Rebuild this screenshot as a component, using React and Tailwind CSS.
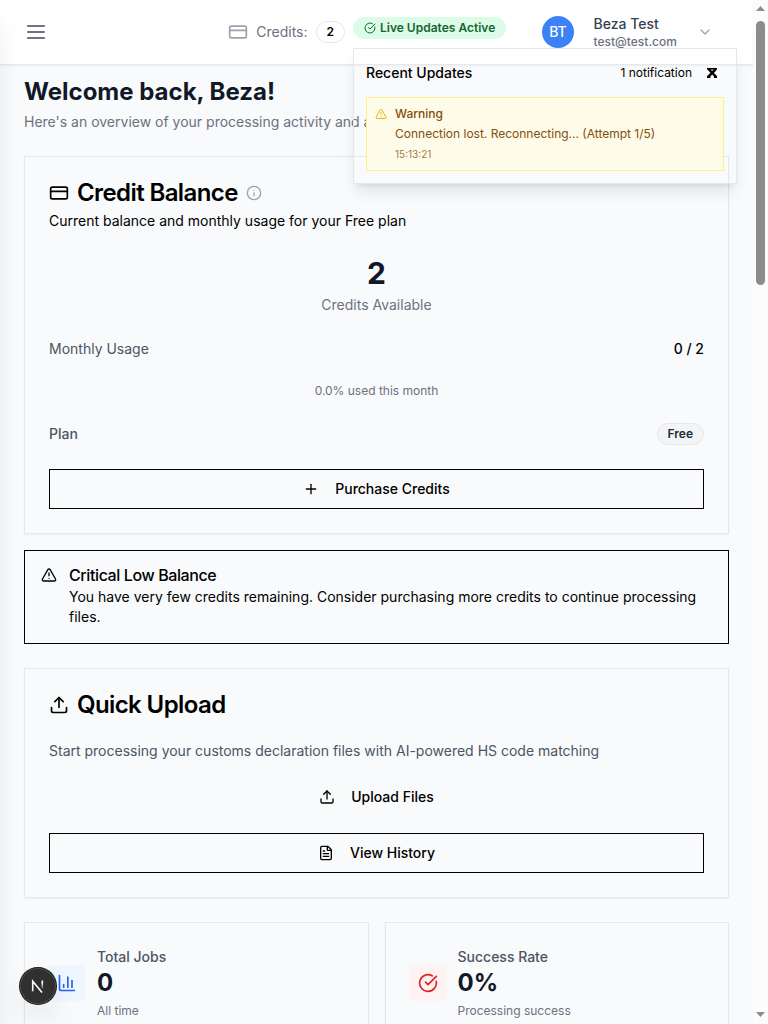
import React from "react";
import {
  CreditCard, Info, Plus, TriangleAlert, Upload, FileText, CircleCheckBig,
  ChevronDown, ChartColumn,
} from "lucide-react";

function Header() {
  return (
    <header className="flex h-[65px] shrink-0 items-center border-b border-[#e5e7eb] bg-white pl-6 pr-10 shadow-xs">
      <svg className="size-6 text-[#6b7280]" viewBox="0 0 24 24" fill="none" stroke="currentColor" strokeWidth="2" strokeLinecap="round">
        <path d="M4 6h16M4 12h16M4 18h16" />
      </svg>
      <div className="ml-auto flex items-center">
        <CreditCard className="size-5 text-[#9ca3af]" />
        <span className="ml-2 text-sm text-[#6b7280]">Credits:</span>
        <span className="ml-2 rounded-full border border-[#e5e7eb] px-2.5 py-0.5 text-xs font-semibold text-black">2</span>
      </div>
      <div className="relative ml-2 mb-2">
        <div className="flex w-[153px] items-center gap-1 rounded-full border border-transparent bg-[#dcfce7] px-2.5 py-0.5 text-xs font-semibold whitespace-nowrap text-[#166534]">
          <CircleCheckBig className="size-3 shrink-0" />
          Live Updates Active
        </div>
        <Notifications />
      </div>
      <div className="ml-9 flex items-center">
        <div className="flex size-8 items-center justify-center rounded-full bg-[#3b82f6] text-sm font-medium text-white">BT</div>
        <div className="ml-[19.5px] w-[83.5px]">
          <p className="text-sm font-medium text-[#374151]">Beza Test</p>
          <p className="text-xs font-medium text-[#6b7280]">test@test.com</p>
        </div>
        <ChevronDown className="ml-5 size-4 text-[#9ca3af]" />
      </div>
    </header>
  );
}

function Notifications() {
  return (
    <div className="absolute left-0 top-[31px] z-50 w-96 border border-[#e5e7eb] p-3 shadow-lg">
      <div className="flex h-6 items-center">
        <h3 className="text-sm font-medium text-black">Recent Updates</h3>
        <span className="ml-auto text-xs text-black">1 notification</span>
        <svg className="ml-[15px] mr-[7px] size-2.5" viewBox="0 0 10 10" fill="none" stroke="black">
          <path d="M0 0.8H10" strokeWidth="1.6" />
          <path d="M1.5 1L8.8 8.6" strokeWidth="2.4" />
          <path d="M8.8 1.2L1.2 8.8" strokeWidth="2.6" />
          <path d="M0 9H3.4M7 9H10" strokeWidth="1.8" />
        </svg>
      </div>
      <div className="mt-3 flex gap-2 border border-[#fef08a] bg-[#fefce8] p-2 text-xs text-[#854d0e]">
        <TriangleAlert className="mt-0.5 size-3 text-[#eab308]" />
        <div className="space-y-1">
          <p className="font-medium">Warning</p>
          <p>Connection lost. Reconnecting... (Attempt 1/5)</p>
          <p className="text-[10px] leading-4 opacity-75">15:13:21</p>
        </div>
      </div>
    </div>
  );
}

function CardTitle({ icon: Icon, children, extra }) {
  return (
    <h2 className="flex items-center gap-2 text-2xl leading-none font-semibold tracking-tight text-black">
      <Icon className="size-5" />
      {children}
      {extra}
    </h2>
  );
}

function CreditBalance() {
  return (
    <section className="mt-6 border border-[#e5e7eb] p-6 shadow-xs">
      <CardTitle icon={CreditCard} extra={<Info className="size-4 text-[#9ca3af]" />}>Credit Balance</CardTitle>
      <p className="mt-1.5 text-sm text-black">Current balance and monthly usage for your Free plan</p>
      <div className="mt-6 text-center">
        <div className="text-3xl font-bold text-[#111827]">2</div>
        <div className="mt-1 text-sm text-[#6b7280]">Credits Available</div>
      </div>
      <div className="mt-6 flex justify-between text-sm">
        <span className="text-[#4b5563]">Monthly Usage</span>
        <span className="font-medium text-black">0 / 2</span>
      </div>
      <p className="mt-6 text-center text-xs text-[#6b7280]">0.0% used this month</p>
      <div className="mt-6 flex items-center justify-between">
        <span className="text-sm font-medium text-[#4b5563]">Plan</span>
        <span className="rounded-full border border-[#e5e7eb] bg-[#f3f4f6] px-2.5 py-0.5 text-xs font-semibold text-[#1f2937]">Free</span>
      </div>
      <OutlineButton icon={Plus} className="mt-6 border border-black">Purchase Credits</OutlineButton>
    </section>
  );
}

function OutlineButton({ icon: Icon, className, children }) {
  return (
    <button className={`flex h-10 w-full items-center justify-center gap-4 text-sm font-medium text-black ${className}`}>
      <Icon className="size-4" />
      {children}
    </button>
  );
}

function StatCard({ icon: Icon, tone, label, value, note }) {
  return (
    <div className="flex items-center border border-[#e5e7eb] p-6 shadow-xs">
      <div className={`p-2 ${tone}`}>
        <Icon className="size-5" />
      </div>
      <div className="ml-3">
        <p className="text-sm font-medium text-[#4b5563]">{label}</p>
        <p className="text-2xl font-bold text-[#111827]">{value}</p>
        <p className="mt-1 text-xs text-[#6b7280]">{note}</p>
      </div>
    </div>
  );
}

export default function App() {
  return (
    <div className="flex h-screen overflow-hidden bg-[#f9fafb] font-['Inter',sans-serif]">
      <div className="fixed inset-y-0 left-0 z-50 w-64 -translate-x-full bg-white shadow-xl" />
      <div className="flex min-w-0 flex-1 flex-col">
        <div className="relative z-10"><Header /></div>
        <main className="px-6 pt-[11px]">
          <h1 className="text-2xl font-bold text-[#111827]">Welcome back, Beza!</h1>
          <p className="mt-1 text-sm text-[#6b7280]">Here's an overview of your processing activity and account status.</p>
          <CreditBalance />
          <section className="relative mt-4 border border-black p-4 text-black">
            <TriangleAlert className="absolute left-4 top-4 size-4" />
            <div className="pl-7">
              <h3 className="mb-1 text-base leading-none font-medium tracking-tight">Critical Low Balance</h3>
              <p className="text-sm">You have very few credits remaining. Consider purchasing more credits to continue processing files.</p>
            </div>
          </section>
          <section className="mt-6 border border-[#e5e7eb] p-6 shadow-xs">
            <CardTitle icon={Upload}>Quick Upload</CardTitle>
            <p className="mt-6 text-sm text-[#4b5563]">Start processing your customs declaration files with AI-powered HS code matching</p>
            <OutlineButton icon={Upload} className="mt-4">Upload Files</OutlineButton>
            <OutlineButton icon={FileText} className="mt-4 border border-black">View History</OutlineButton>
          </section>
          <div className="mt-6 grid grid-cols-2 gap-4">
            <StatCard icon={ChartColumn} tone="bg-[#eff6ff] text-[#2563eb]" label="Total Jobs" value="0" note="All time" />
            <StatCard icon={CircleCheckBig} tone="bg-[#fef2f2] text-[#dc2626]" label="Success Rate" value="0%" note="Processing success" />
          </div>
        </main>
      </div>
      <div className="flex w-[15px] shrink-0 flex-col items-center bg-[#fcfcfc]">
        <svg className="mt-1.5 h-[5px] w-[9px]" viewBox="0 0 9 5"><path d="M0 5L4.5 0L9 5Z" fill="#8b8b8b" /></svg>
        <div className="mt-2.5 h-[264px] w-[9px] rounded-full bg-[#8b8b8b]" />
        <svg className="mt-auto mb-[7px] h-[5px] w-[9px]" viewBox="0 0 9 5"><path d="M0 0L4.5 5L9 0Z" fill="#8b8b8b" /></svg>
      </div>
      <div className="fixed bottom-5 left-5 z-50 flex size-9 items-center justify-center rounded-full bg-[#303030] shadow-[0_0_0_1px_#171717,inset_0_0_0_1px_#4a4a4a,0_16px_32px_-8px_rgba(0,0,0,0.24)]">
        <svg className="size-4" viewBox="0 0 16 16" fill="none">
          <defs>
            <linearGradient id="fade" x1="0" y1="0" x2="0" y2="1">
              <stop offset="0.3" stopColor="white" /><stop offset="1" stopColor="white" stopOpacity="0" />
            </linearGradient>
          </defs>
          <path d="M2.7 13.2V3.2L12 14.5" stroke="white" strokeWidth="1.6" />
          <rect x="11.5" y="2.5" width="1.6" height="9" fill="url(#fade)" />
        </svg>
      </div>
    </div>
  );
}
